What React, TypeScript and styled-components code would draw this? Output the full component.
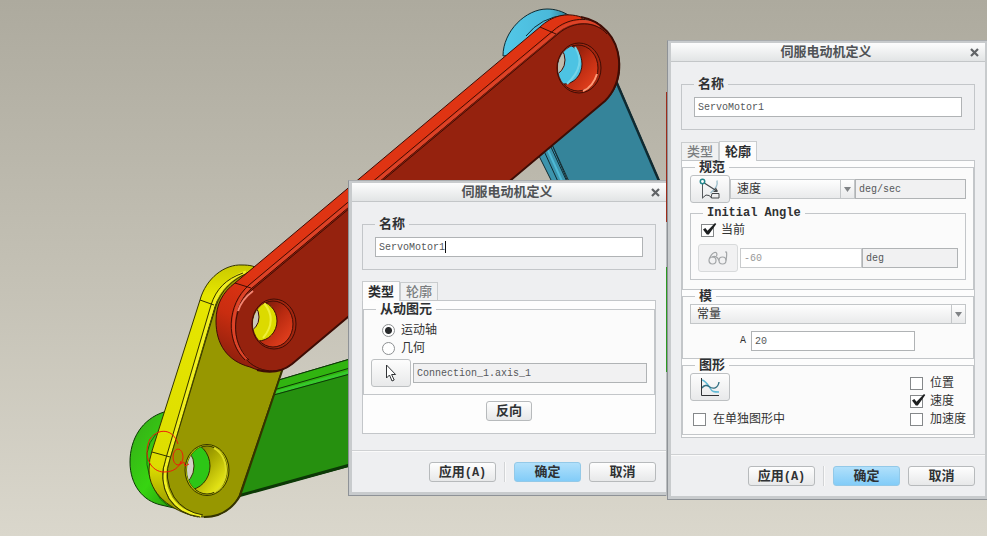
import React, { useId, useState } from "react";
import styled, { createGlobalStyle, css } from "styled-components";

const GlobalStyle = createGlobalStyle`
  * { box-sizing: border-box; }
  html, body { margin: 0; height: 100%; }
  body {
    overflow: hidden;
    color: #333;
    font: 12px/18px "Liberation Sans", "Noto Sans CJK SC", sans-serif;
  }
  button, input, select { font: inherit; color: inherit; margin: 0; }
`;

const mono = css`
  font-family: "Liberation Mono", "Noto Sans CJK SC", monospace;
  font-size: 10px;
`;

/* ---------- workspace ---------- */

const Workspace = styled.main`
  position: relative;
  min-height: 100vh;
  overflow: hidden;
  background: linear-gradient(#adaa9e, #c3c0b4 50%, #dad7cc);
`;

const SceneSvg = styled.svg`
  position: absolute;
  inset: 0;
  width: 100%;
  height: 100%;
`;

/* ---------- dialog ---------- */

const DialogFrame = styled.section<{ $left: number; $top: number; $edge: number }>`
  position: absolute;
  left: ${(p) => p.$left}px;
  top: ${(p) => p.$top}px;
  padding: 2px ${(p) => p.$edge}px 3px 3px;
  border: 1px solid #8e9297;
  border-top-color: #a9acae;
  border-right: 0;
  background: #c8cbcd;
`;

const DialogSurface = styled.div`
  width: 314px;
  background: #eeeff1;
`;

const TitleBar = styled.header`
  display: flex;
  align-items: center;
  height: 19px;
  padding-left: 18px;
  border-bottom: 1px solid #c3c6c8;
  background: linear-gradient(#fdfdfd, #e2e4e5);
`;

const Title = styled.h2`
  flex: 1;
  margin: 0;
  font-size: 13px;
  line-height: 18px;
  text-align: center;
  color: #505356;
`;

const CloseButton = styled.button`
  display: grid;
  place-items: center;
  width: 22px;
  height: 18px;
  padding: 0;
  border: 0;
  background: none;
`;

const Body = styled.div`
  padding: 13px 10px 16px;
`;

const Legend = styled.legend<{ $height: number; $inset?: boolean }>`
  height: ${(p) => p.$height}px;
  margin-left: ${(p) => (p.$inset ? 5 : 0)}px;
  padding: 0 4px;
  font-size: 13px;
  font-weight: bold;
  line-height: ${(p) => p.$height}px;
  white-space: nowrap;
  color: #2f3133;
`;

const LatinLegend = styled(Legend)`
  font-family: "Liberation Mono", monospace;
  font-size: 12px;
`;

const NameGroup = styled.fieldset`
  min-width: 0;
  margin: 0 0 11px;
  padding: 4px 12px 12px;
  border: 1px solid #c3c6c9;
`;

const Group = styled.fieldset<{ $top: number; $bottom: number }>`
  min-width: 0;
  margin: 0;
  padding: ${(p) => p.$top}px 7px ${(p) => p.$bottom}px;
  border: 1px solid #c3c6c9;
  background: #fbfbfb;
`;

const InnerGroup = styled(Group)`
  margin-top: 3px;
`;

const Tabs = styled.div`
  display: flex;
  align-items: flex-end;
  height: 19px;
`;

const Tab = styled.button<{ $active: boolean }>`
  height: ${(p) => (p.$active ? 20 : 18)}px;
  margin-bottom: ${(p) => (p.$active ? -1 : 0)}px;
  padding: 0 5px;
  border: 1px solid #c9ccce;
  border-bottom: 0;
  position: relative;
  background: ${(p) => (p.$active ? "#fcfcfc" : "#f0f1f2")};
  color: ${(p) => (p.$active ? "#2b2d2f" : "#7b7e80")};
  font-size: 13px;
  font-weight: ${(p) => (p.$active ? "bold" : 500)};
  line-height: 18px;
`;

const Panel = styled.div<{ $bottom: number }>`
  padding-bottom: ${(p) => p.$bottom}px;
  border: 1px solid #c3c6c9;
  background: #fdfdfd;
`;

const Row = styled.div<{ $above?: number; $gap?: number }>`
  display: flex;
  align-items: center;
  margin-top: ${(p) => p.$above ?? 0}px;
  gap: ${(p) => p.$gap ?? 0}px;
`;

const FieldPair = styled.div`
  display: flex;
  flex: 1;
  min-width: 0;
`;

const AmplitudeRow = styled(Row)`
  padding: 0 51px 0 50px;
`;

const CenterRow = styled(Row)`
  justify-content: center;
`;

const TextField = styled.input<{ $width?: number }>`
  ${mono}
  display: block;
  flex: ${(p) => (p.$width ? "none" : "1")};
  width: ${(p) => (p.$width ? `${p.$width}px` : "100%")};
  min-width: 0;
  height: 20px;
  padding: 0 3px;
  border: 1px solid #b0b3b5;
  border-radius: 0;
  outline: none;
  background: #fff;
  color: #55585a;

  &:read-only { background: #f1f1f2; }
  &:disabled { background: #fff; color: #999; border-color: #c9cbcd; }
`;

const FieldWithCaret = styled.div`
  position: relative;
`;

const Caret = styled.span`
  position: absolute;
  left: 70px;
  top: 4px;
  width: 1px;
  height: 12px;
  background: #111;
`;

const MonoLabel = styled.label`
  ${mono}
  width: 11px;
`;

const Button = styled.button<{ $primary?: boolean; $width?: number }>`
  width: ${(p) => p.$width ?? 67}px;
  height: 20px;
  padding: 0;
  border: 1px solid ${(p) => (p.$primary ? "#93c9e8" : "#b7babc")};
  border-radius: 3px;
  background: ${(p) =>
    p.$primary ? "linear-gradient(#b0e0fb, #82ccf8)" : "linear-gradient(#fefefe, #e7e8e9)"};
  color: #2f3234;
  font-size: 13px;
  font-weight: bold;
  line-height: 18px;
`;

const AccessKey = styled.span`
  font-family: "Liberation Mono", monospace;
  font-size: 12px;
`;

const ToolButton = styled.button`
  display: grid;
  place-items: center;
  flex: none;
  width: 40px;
  height: 28px;
  padding: 0;
  border: 1px solid #bdc0c2;
  border-radius: 3px;
  background: linear-gradient(#fdfdfd, #e8e9ea);

  &:disabled { border-color: #d8dadb; background: #f1f1f2; }
`;

const SelectBox = styled.div`
  position: relative;
  flex: 1;
`;

const Select = styled.select`
  appearance: none;
  display: block;
  width: 100%;
  height: 20px;
  padding: 0 20px 0 6px;
  border: 1px solid #c3c6c8;
  border-radius: 0;
  outline: none;
  background: linear-gradient(#fefefe, #e9eaeb);
  line-height: 18px;
`;

const SelectArrow = styled.span`
  position: absolute;
  right: 1px;
  top: 1px;
  display: grid;
  place-items: center;
  width: 14px;
  height: 18px;
  border-left: 1px solid #c3c6c8;
  pointer-events: none;
`;

const Choice = styled.label<{ $indent?: number }>`
  display: flex;
  align-items: center;
  gap: ${(p) => (p.$indent === 11 ? 6 : 7)}px;
  height: 18px;
  margin-left: ${(p) => p.$indent ?? 0}px;
  white-space: nowrap;
`;

const CheckMark = styled.span`
  position: relative;
  display: block;
  width: 13px;
  height: 13px;

  svg {
    position: absolute;
    left: 0;
    top: -2px;
    pointer-events: none;
  }
`;

const CheckInput = styled.input`
  appearance: none;
  display: block;
  width: 13px;
  height: 13px;
  border: 1px solid #85888a;
  background: #fff;
`;

const Radio = styled.input`
  appearance: none;
  flex: none;
  width: 13px;
  height: 13px;
  border: 1px solid #8d9092;
  border-radius: 50%;
  background: #fff;

  &:checked { background: radial-gradient(circle, #292b2d 3px, #fff 4px); }
`;

const PlotOptions = styled.div`
  display: flex;
  justify-content: space-between;
`;

const PlotColumn = styled.div`
  display: flex;
  flex-direction: column;
  justify-content: space-between;
`;

const QuantityColumn = styled.div`
  padding-top: 1px;
`;

const Footer = styled.footer`
  display: flex;
  justify-content: flex-end;
  gap: 8px;
  padding: 11px 10px 10px;
  border-top: 1px solid #cfd1d3;
  box-shadow: inset 0 1px #fafafa;
`;

const Divider = styled.span`
  width: 2px;
  border-left: 1px solid #d2d4d6;
  background: #fafafa;
`;

/* ---------- icons ---------- */

const CloseIcon = () => (
  <svg width="9" height="9" viewBox="0 0 9 9">
    <path d="M1 1 8 8M8 1 1 8" stroke="#606366" strokeWidth="2.2" />
  </svg>
);

const CursorIcon = () => (
  <svg width="12" height="18" viewBox="0 0 12 18">
    <path d="M1.5 1v13l3-3 2.5 6 2.2-1-2.6-5.5h4Z" fill="#fff" stroke="#303336" />
  </svg>
);

const ArrowDown = () => (
  <svg width="7" height="5" viewBox="0 0 7 5">
    <path d="M0 0h7L3.5 5Z" fill="#808386" />
  </svg>
);

const TickIcon = () => (
  <svg width="16" height="15" viewBox="0 0 16 15">
    <path d="m2 7.500 2.300-1.500 2.200 2.800L14 1l1.300 1L7.800 12.500H5.800Z" fill="#1d1f20" />
  </svg>
);

const MotionIcon = () => (
  <svg width="22" height="22" viewBox="0 0 22 22" fill="none">
    <path d="M18 2.500c1 5-1 8-6.500 12.500" stroke="#9dbfcc" strokeWidth="1.400" />
    <path d="M3.500 6v14.500" stroke="#54585b" />
    <path d="m4.500 4.500 14 9m0 0-2-3.500m2 3.500-4-.2" stroke="#44484b" strokeWidth="1.200" />
    <path d="M4 19.500q3-4 6-2l3 2.500M12 19.500l1-4h7v4.500h-7Z" stroke="#44484b" />
    <circle cx="3.500" cy="3.500" r="2.200" fill="#fff" stroke="#23878c" strokeWidth="1.500" />
  </svg>
);

const GlassesIcon = () => (
  <svg width="20" height="14" viewBox="0 0 20 14" fill="none" stroke="#a2a5a7" strokeWidth="1.200">
    <circle cx="4.500" cy="9.500" r="3.500" />
    <circle cx="14.500" cy="9.500" r="3.500" />
    <path d="M1.500 7.500C3 3.500 6 .5 8 1.500q1.500 1 .5 3.500M4 6q5-2 7 3.500M18 9.500q1-5 .5-8.500h-1.500" />
  </svg>
);

const GraphIcon = () => (
  <svg width="21" height="20" viewBox="0 0 21 20" fill="none">
    <path d="M2 3c4 1 6 5 8 8 2 4 4 4 9 4" stroke="#60b9d5" strokeWidth="1.400" />
    <path d="M2 11c2-3 5-3 7-1.500 4 3 9 2 10-4.500" stroke="#326f82" strokeWidth="1.400" />
    <path d="M1.500 1v17.500H19" stroke="#303336" />
  </svg>
);

/* ---------- composite controls ---------- */

function CheckChoice({ label, on, indent }: { label: string; on?: boolean; indent?: number }) {
  const [checked, setChecked] = useState(!!on);
  return (
    <Choice $indent={indent}>
      <CheckMark>
        <CheckInput type="checkbox" checked={checked} onChange={() => setChecked(!checked)} />
        {checked && <TickIcon />}
      </CheckMark>
      {label}
    </Choice>
  );
}

function Dropdown({ label, options }: { label: string; options: string[] }) {
  return (
    <SelectBox>
      <Select aria-label={label}>
        {options.map((o) => (
          <option key={o}>{o}</option>
        ))}
      </Select>
      <SelectArrow><ArrowDown /></SelectArrow>
    </SelectBox>
  );
}

type DialogProps = {
  left: number;
  top: number;
  edge: number;
  caret?: boolean;
  active: "类型" | "轮廓";
  panelBottom: number;
  children: React.ReactNode;
};

function Dialog({ left, top, edge, caret, active, panelBottom, children }: DialogProps) {
  const titleId = useId();
  return (
    <DialogFrame $left={left} $top={top} $edge={edge} role="dialog" aria-labelledby={titleId}>
      <DialogSurface>
        <TitleBar>
          <Title id={titleId}>伺服电动机定义</Title>
          <CloseButton aria-label="关闭"><CloseIcon /></CloseButton>
        </TitleBar>
        <Body>
          <NameGroup>
            <Legend $height={18}>名称</Legend>
            <FieldWithCaret>
              <TextField aria-label="名称" defaultValue="ServoMotor1" />
              {caret && <Caret />}
            </FieldWithCaret>
          </NameGroup>
          <Tabs role="tablist">
            {["类型", "轮廓"].map((name) => (
              <Tab key={name} role="tab" aria-selected={name === active} $active={name === active}>
                {name}
              </Tab>
            ))}
          </Tabs>
          <Panel role="tabpanel" $bottom={panelBottom}>{children}</Panel>
        </Body>
        <Footer>
          <Button>应用<AccessKey>(A)</AccessKey></Button>
          <Divider />
          <Button $primary>确定</Button>
          <Button>取消</Button>
        </Footer>
      </DialogSurface>
    </DialogFrame>
  );
}

/* ---------- linkage model ---------- */

function Linkage() {
  return (
    <SceneSvg viewBox="0 0 987 536" preserveAspectRatio="xMinYMin slice" aria-hidden="true">
      <defs>
        <linearGradient id="greenSide" x1="0" y1="0" x2="1" y2="1">
          <stop offset="0" stopColor="#35a818" />
          <stop offset=".5" stopColor="#37d411" />
          <stop offset="1" stopColor="#1d7d0b" />
        </linearGradient>
        <linearGradient id="yellowSide" x1="0" y1="0" x2="0" y2="1">
          <stop offset="0" stopColor="#c9c900" />
          <stop offset=".12" stopColor="#e6e600" />
          <stop offset=".8" stopColor="#dddd00" />
          <stop offset="1" stopColor="#8b8b00" />
        </linearGradient>
        <linearGradient id="redSide" gradientUnits="userSpaceOnUse" x1="216" y1="370" x2="262" y2="280">
          <stop offset="0" stopColor="#7a1b0b" />
          <stop offset=".55" stopColor="#c92d10" />
          <stop offset="1" stopColor="#df3413" />
        </linearGradient>
        <linearGradient id="redBore" x1="0" y1="0" x2="1" y2="1">
          <stop offset="0" stopColor="#5f1408" />
          <stop offset=".5" stopColor="#b82a10" />
          <stop offset="1" stopColor="#f04622" />
        </linearGradient>
        <linearGradient id="yellowBore" x1="0" y1="0" x2="1" y2="1">
          <stop offset="0" stopColor="#686800" />
          <stop offset=".45" stopColor="#aaa900" />
          <stop offset="1" stopColor="#ffff20" />
        </linearGradient>
        <linearGradient id="blueSide" x1="0" y1="0" x2="1" y2="0">
          <stop offset="0" stopColor="#53c8e8" />
          <stop offset=".7" stopColor="#4ab9da" />
          <stop offset="1" stopColor="#2c788d" />
        </linearGradient>
        <clipPath id="lowerRedHole"><ellipse cx="273" cy="324" rx="20" ry="23" /></clipPath>
        <clipPath id="upperRedHole"><ellipse cx="578" cy="68" rx="20" ry="23" /></clipPath>
        <clipPath id="yellowHole"><ellipse cx="207" cy="470" rx="20" ry="24" /></clipPath>
      </defs>

      {/* blue link */}
      <g stroke="#102a31" strokeLinejoin="round">
        <path d="M503 56C503 31 526 9 547 9c8 0 15 2 23 7L545 50Z" fill="url(#blueSide)" />
        <path d="M526 36Q541 17 566 15" fill="none" />
        <path d="M536 150 551 142 580 210H566Z" fill="#3c94ad" />
        <path d="M550 140 617 82 672 210H582Z" fill="#35849a" />
        <path d="M547 148 575 210" stroke="#4eb9d5" strokeWidth="2" />
        <path d="M551 147 580 210M544 151l27 59" fill="none" />
        <path d="m616 81 56 130" strokeWidth="2.500" fill="none" />
      </g>

      {/* green link */}
      <g stroke="#0c3806" strokeLinejoin="round">
        <path d="M272 382 350 359V466L239 496Z" fill="#26900f" />
        <path d="M272 382 350 359V372L270 395Z" fill="#31b410" />
        <path d="m270 394 80-22" stroke="#36c82c" strokeWidth="3" />
        <path d="M270 391 350 368M270 396 350 374" fill="none" />
        <path d="m238 496 112-31" strokeWidth="3" fill="none" />
        <path d="M164 412C142 419 130 439 130 462c0 23 13 39 31 43l26 6 8-90Z" fill="url(#greenSide)" />
        <path d="M156 434Q141 450 150 478T174 507" fill="none" stroke="#126d07" />
      </g>

      {/* yellow link */}
      <g stroke="#343400" strokeLinejoin="round">
        <path d="M200 300C206 278 225 264 242 265c8 0 13 1 18 5L230 350 198 517C170 511 149 493 149 470q0-11 3-19L158 432Z" fill="url(#yellowSide)" />
        <path d="M215 306C220 289 230 278 250 272L300 325 282 370 239 496C231 511 219 517 204 517C177 517 164 496 163 474q0-8 7-19Z" fill="#979700" />
        <path d="M246 272C229 278 219 289 213 306L168 459Q160 479 171 498Q181 513 201 516" fill="none" stroke="#f0ef21" strokeWidth="3" />
        <path d="M250 272C232 279 221 291 216 306L170 459Q163 478 174 497Q184 512 203 515M243 273C226 279 216 289 211 305L166 458Q158 480 169 499Q179 514 200 517" fill="none" />
        <path d="m200 300 14 5M152 452l18 5" fill="none" />
        <path d="M283 368 240 496C231 511 219 517 204 517" fill="none" strokeWidth="2" />
        <ellipse cx="207" cy="470" rx="22" ry="25.500" fill="#b9b900" />
        <ellipse cx="207" cy="470" rx="20" ry="24" fill="url(#yellowBore)" />
        <g clipPath="url(#yellowHole)">
          <ellipse cx="188" cy="466" rx="22" ry="24" fill="#2dc616" />
          <ellipse cx="181" cy="466" rx="13" ry="18" fill="#d4d1c7" />
        </g>
        <path d="M214 448a20 24 0 0 1 0 44" fill="none" stroke="#dddd23" strokeWidth="2" />
      </g>

      {/* red link */}
      <g stroke="#3e0d05" strokeLinejoin="round">
        <path d="M235 283 540 27C552 16 566 12 581 17L606 50 290 365C278 373 263 373 250 367C227 361 216 344 216 321c0-17 7-29 19-38Z" fill="url(#redSide)" />
        <path d="M252 288 557 33C580 13 606 22 615 44C624 65 620 87 605 101L292 364C281 374 258 374 245 358C229 340 230 307 252 288Z" fill="#95220e" />
        <path d="M247 359C228 342 229 306 251 286L556 32C570 20 588 19 600 26" fill="none" stroke="#dc4328" strokeWidth="3" />
        <path d="M249 360C230 342 231 308 253 289L558 34C574 20 596 21 607 34M245 360C226 342 226 305 249 285L554 30C568 18 586 17 598 23" fill="none" />
        <path d="m235 283 16 5M540 27l16 7" fill="none" />
        <path d="M581 17C602 21 617 37 619 60C620 78 615 91 605 101L292 364C282 372 269 373 257 370" fill="none" strokeWidth="2" />
        <path d="M238 311Q242 299 253 291" fill="none" stroke="#f48572" strokeWidth="2" />

        <ellipse cx="274" cy="324" rx="22" ry="25" fill="#a3260f" />
        <ellipse cx="273" cy="324" rx="20" ry="23" fill="url(#redBore)" />
        <g clipPath="url(#lowerRedHole)">
          <ellipse cx="258" cy="321" rx="19" ry="20" fill="#dcda00" />
          <path d="M264 303q14 17-1 35" fill="none" stroke="#eeee38" strokeWidth="2" />
          <ellipse cx="248" cy="317" rx="11" ry="14" fill="#cbc8bc" />
        </g>
        <ellipse cx="579" cy="68" rx="22" ry="25" fill="#a3260f" />
        <ellipse cx="578" cy="68" rx="20" ry="23" fill="url(#redBore)" />
        <g clipPath="url(#upperRedHole)">
          <ellipse cx="564" cy="64" rx="18" ry="20" fill="#4dc3e3" />
          <path d="M575 47q12 18-8 37" fill="none" stroke="#75d4e9" strokeWidth="2" />
          <ellipse cx="553" cy="60" rx="12" ry="15" fill="#c0bcad" />
        </g>
        <path d="M597 74q-4 13-14 17" fill="none" stroke="#ff9b78" strokeWidth="2" />
      </g>

      {/* joint axis marker */}
      <g fill="none" stroke="#ee1c0c">
        <path d="M178 444C173 428 158 428 150 439C142 456 151 472 164 472c9 0 15-4 17-11" />
        <ellipse cx="178" cy="457" rx="5" ry="8" />
        <path d="m179 465 5-3 1 4 4-2" />
      </g>

      <path d="M666 180v316" stroke="#b9bcbe" strokeWidth="2" />
      <path d="M666.500 92v130" stroke="#9d2c1b" />
      <path d="M666.500 267v105" stroke="#2c9a22" />
    </SceneSvg>
  );
}

export default function App() {
  return (
    <Workspace>
      <GlobalStyle />
      <Linkage />

      <Dialog left={348} top={180} edge={0} caret active="类型" panelBottom={12}>
        <Group $top={4} $bottom={7}>
          <Legend $height={16} $inset>从动图元</Legend>
          <Choice $indent={11}>
            <Radio type="radio" name="driven" defaultChecked />
            运动轴
          </Choice>
          <Choice $indent={11}>
            <Radio type="radio" name="driven" />
            几何
          </Choice>
          <Row $above={2} $gap={2}>
            <ToolButton aria-label="选取"><CursorIcon /></ToolButton>
            <TextField aria-label="运动轴" readOnly defaultValue="Connection_1.axis_1" />
          </Row>
        </Group>
        <CenterRow $above={6}>
          <Button $width={46}>反向</Button>
        </CenterRow>
      </Dialog>

      <Dialog left={667} top={40} edge={2} active="轮廓" panelBottom={2}>
        <Group $top={2} $bottom={9}>
          <Legend $height={12} $inset>规范</Legend>
          <Row>
            <ToolButton aria-label="运动规范"><MotionIcon /></ToolButton>
            <Dropdown label="规范" options={["速度", "位置", "加速度"]} />
            <TextField aria-label="速度单位" readOnly $width={111} defaultValue="deg/sec" />
          </Row>
          <InnerGroup $top={1} $bottom={7}>
            <LatinLegend $height={14} $inset>Initial Angle</LatinLegend>
            <CheckChoice label="当前" on indent={3} />
            <Row $above={5} $gap={2}>
              <ToolButton aria-label="预览" disabled><GlassesIcon /></ToolButton>
              <FieldPair>
                <TextField aria-label="角度" disabled defaultValue="-60" />
                <TextField aria-label="角度单位" readOnly $width={96} defaultValue="deg" />
              </FieldPair>
            </Row>
          </InnerGroup>
        </Group>
        <Group $top={2} $bottom={7}>
          <Legend $height={12} $inset>模</Legend>
          <Row>
            <Dropdown label="模" options={["常量", "斜坡", "余弦"]} />
          </Row>
          <AmplitudeRow $above={7}>
            <MonoLabel htmlFor="amplitude">A</MonoLabel>
            <TextField id="amplitude" defaultValue="20" />
          </AmplitudeRow>
        </Group>
        <Group $top={2} $bottom={6}>
          <Legend $height={12} $inset>图形</Legend>
          <PlotOptions>
            <PlotColumn>
              <ToolButton aria-label="绘制图形"><GraphIcon /></ToolButton>
              <CheckChoice label="在单独图形中" indent={3} />
            </PlotColumn>
            <QuantityColumn>
              <CheckChoice label="位置" />
              <CheckChoice label="速度" on />
              <CheckChoice label="加速度" />
            </QuantityColumn>
          </PlotOptions>
        </Group>
      </Dialog>
    </Workspace>
  );
}
